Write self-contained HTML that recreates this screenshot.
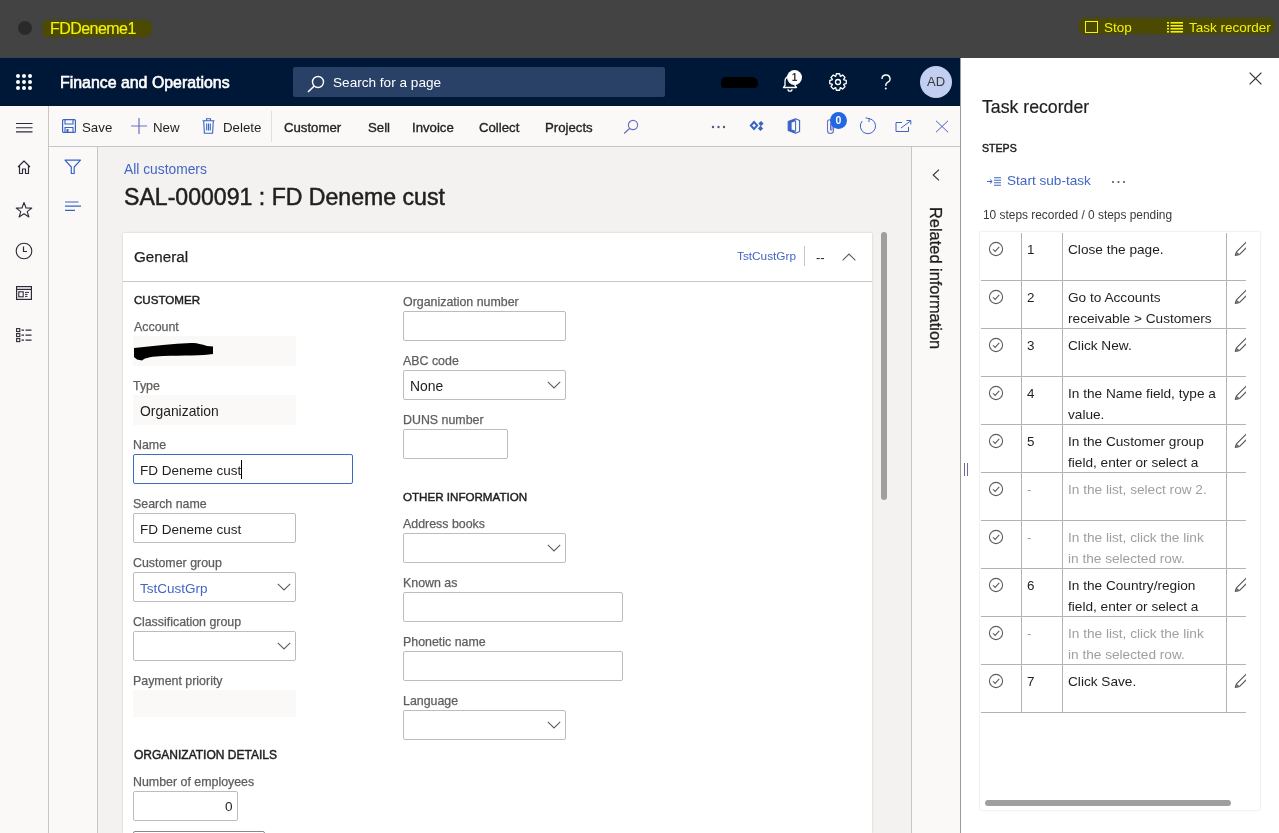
<!DOCTYPE html>
<html><head><meta charset="utf-8">
<style>
*{box-sizing:border-box;margin:0;padding:0}
html,body{width:1279px;height:833px;overflow:hidden;font-family:"Liberation Sans",sans-serif;background:#fff;color:#201f1e;position:relative}
.a{position:absolute}
.t{position:absolute;white-space:nowrap;will-change:transform}
svg.a{overflow:visible}
</style></head><body>
<div class="a" style="left:0px;top:0px;width:1279px;height:58px;background:#434343"></div>
<div class="a" style="left:0px;top:58px;width:960px;height:48px;background:#001838"></div>
<div class="a" style="left:0px;top:57px;width:960px;height:1px;background:#39424f"></div>
<div class="a" style="left:0px;top:106px;width:960px;height:727px;background:#faf9f8"></div>
<div class="a" style="left:98px;top:147px;width:813px;height:686px;background:#f3f2f1"></div>
<div class="a" style="left:48px;top:106px;width:1px;height:727px;background:#c8c6c4"></div>
<div class="a" style="left:49px;top:146px;width:911px;height:1px;background:#c8c6c4"></div>
<div class="a" style="left:97px;top:147px;width:1px;height:686px;background:#c8c6c4"></div>
<div class="a" style="left:911px;top:147px;width:1px;height:686px;background:#c8c6c4"></div>
<div class="a" style="left:960px;top:58px;width:319px;height:775px;background:#ffffff"></div>
<div class="a" style="left:960px;top:58px;width:1px;height:775px;background:#9d9b99"></div>
<div class="a" style="left:18px;top:21px;width:14px;height:14px;border-radius:50%;background:#2a2a2a"></div>
<div class="a" style="left:43px;top:20px;width:109px;height:17px;background:#4b4a00;border-radius:4px 7px 7px 4px;filter:blur(0.8px)"></div>
<div class="t" style="left:50px;top:20.66px;font-size:16px;line-height:16px;color:#f2f20a;font-weight:normal;letter-spacing:-0.55px;-webkit-text-stroke:0.15px #f2f20a;">FDDeneme1</div>
<div class="a" style="left:1079px;top:18px;width:195px;height:16px;background:#4b4a00;border-radius:5px;filter:blur(1px)"></div>
<div class="a" style="left:1085px;top:21px;width:13px;height:12px;border:1.5px solid #f2f20a"></div>
<div class="t" style="left:1104px;top:21.27px;font-size:13.5px;line-height:13.5px;color:#f2f20a;font-weight:normal;">Stop</div>
<svg class="a" style="left:1167px;top:22px;" width="16" height="11" viewBox="0 0 16 11" fill="none"><g fill="#f2f20a"><rect x="0" y="0" width="2" height="1.6"/><rect x="3.5" y="0" width="12.5" height="1.6"/><rect x="0" y="3" width="2" height="1.6"/><rect x="3.5" y="3" width="12.5" height="1.6"/><rect x="0" y="6" width="2" height="1.6"/><rect x="3.5" y="6" width="12.5" height="1.6"/><rect x="0" y="9" width="2" height="1.6"/><rect x="3.5" y="9" width="12.5" height="1.6"/></g></svg>
<div class="t" style="left:1189px;top:21.27px;font-size:13.5px;line-height:13.5px;color:#f2f20a;font-weight:normal;">Task recorder</div>
<svg class="a" style="left:16px;top:74px;" width="16" height="16" viewBox="0 0 16 16" fill="none"><circle cx="2" cy="2" r="2" fill="#fff"/><circle cx="2" cy="8" r="2" fill="#fff"/><circle cx="2" cy="14" r="2" fill="#fff"/><circle cx="8" cy="2" r="2" fill="#fff"/><circle cx="8" cy="8" r="2" fill="#fff"/><circle cx="8" cy="14" r="2" fill="#fff"/><circle cx="14" cy="2" r="2" fill="#fff"/><circle cx="14" cy="8" r="2" fill="#fff"/><circle cx="14" cy="14" r="2" fill="#fff"/></svg>
<div class="t" style="left:60px;top:74.84px;font-size:15.9px;line-height:15.9px;color:#ffffff;font-weight:normal;-webkit-text-stroke:0.6px #ffffff;">Finance and Operations</div>
<div class="a" style="left:293px;top:67px;width:372px;height:30px;background:#294067;border-radius:2px"></div>
<svg class="a" style="left:306px;top:75px;" width="20" height="18" viewBox="0 0 20 18" fill="none"><circle cx="12" cy="7" r="5.5" stroke="#fff" stroke-width="1.4"/><path d="M8.2 11 L2 17" stroke="#fff" stroke-width="1.6"/></svg>
<div class="t" style="left:333px;top:76.49px;font-size:13.6px;line-height:13.6px;color:#ffffff;font-weight:normal;">Search for a page</div>
<div class="a" style="left:721px;top:77px;width:37px;height:11px;background:#000;border-radius:5px 6px 4px 3px"></div>
<svg class="a" style="left:780px;top:72px;" width="24" height="20" viewBox="0 0 24 20" fill="none"><path d="M3.5 15.5 L5 13.5 V9 A5 5 0 0 1 15 9 V13.5 L16.5 15.5 Z" stroke="#fff" stroke-width="1.3" stroke-linejoin="round"/><path d="M8 17.2 A2 2 0 0 0 12 17.2" stroke="#fff" stroke-width="1.3"/></svg>
<div class="a" style="left:787px;top:70px;width:15px;height:15px;border-radius:50%;background:#fff;font-size:10px;font-weight:bold;line-height:15px;text-align:center;color:#323130;will-change:transform">1</div>
<svg class="a" style="left:827.5px;top:72px;" width="20" height="20" viewBox="0 0 20 20" fill="none"><g transform="translate(10 10)" stroke="#fff" stroke-width="1.3" fill="none"><path d="M8.23 -1.67 L8.23 1.67 L5.80 2.18 L5.65 2.56 L7.00 4.64 L4.64 7.00 L2.56 5.65 L2.18 5.80 L1.67 8.23 L-1.67 8.23 L-2.18 5.80 L-2.56 5.65 L-4.64 7.00 L-7.00 4.64 L-5.65 2.56 L-5.80 2.18 L-8.23 1.67 L-8.23 -1.67 L-5.80 -2.18 L-5.65 -2.56 L-7.00 -4.64 L-4.64 -7.00 L-2.56 -5.65 L-2.18 -5.80 L-1.67 -8.23 L1.67 -8.23 L2.18 -5.80 L2.56 -5.65 L4.64 -7.00 L7.00 -4.64 L5.65 -2.56 L5.80 -2.18 Z" stroke-linejoin="round"/><circle r="2.5"/></g></svg>
<svg class="a" style="left:881px;top:75px;" width="10" height="15" viewBox="0 0 10 15" fill="none"><path d="M1 4 A4 3.8 0 1 1 6.5 7.3 C5.3 8 4.8 8.8 4.8 10.3 V11" stroke="#fff" stroke-width="1.4"/><circle cx="4.8" cy="13.6" r="1" fill="#fff"/></svg>
<div class="a" style="left:920px;top:66px;width:32px;height:32px;border-radius:50%;background:#c2cff0;font-size:13px;line-height:32px;text-align:center;color:#3a3a3a;will-change:transform">AD</div>
<svg class="a" style="left:16px;top:122px;" width="17" height="11" viewBox="0 0 17 11" fill="none"><g stroke="#2f2b3a" stroke-width="1.1"><path d="M0 1.5H16.5M0 5.7H16.5M0 9.9H16.5"/></g></svg>
<svg class="a" style="left:16px;top:159px;" width="16" height="16" viewBox="0 0 16 16" fill="none"><path d="M2 8 L8 2 L14 8 M3.5 7 V14.5 H6.5 V10 H9.5 V14.5 H12.5 V7" stroke="#2f2b3a" stroke-width="1.2" stroke-linejoin="round"/></svg>
<svg class="a" style="left:15px;top:201px;" width="18" height="17" viewBox="0 0 18 17" fill="none"><path d="M9 1.5 L11 7 L16.8 7.1 L12.2 10.6 L13.9 16 L9 12.8 L4.1 16 L5.8 10.6 L1.2 7.1 L7 7 Z" stroke="#2f2b3a" stroke-width="1.1" stroke-linejoin="round"/></svg>
<svg class="a" style="left:15px;top:242px;" width="18" height="18" viewBox="0 0 18 18" fill="none"><circle cx="9" cy="9" r="7.8" stroke="#2f2b3a" stroke-width="1.1"/><path d="M8.5 4.5 V9.5 H12" stroke="#2f2b3a" stroke-width="1.2"/></svg>
<svg class="a" style="left:16px;top:286px;" width="16" height="14" viewBox="0 0 16 14" fill="none"><rect x="0.6" y="0.6" width="14.8" height="12.8" stroke="#2f2b3a" stroke-width="1.2"/><path d="M0.6 3.4 H15.4" stroke="#2f2b3a" stroke-width="1.2"/><rect x="2.8" y="5.8" width="4.4" height="5" stroke="#2f2b3a" stroke-width="1.1"/><path d="M9 6.4 H13 M9 8.4 H11.5 M9 10.4 H11.5" stroke="#2f2b3a" stroke-width="1"/></svg>
<svg class="a" style="left:16px;top:328px;" width="16" height="14" viewBox="0 0 16 14" fill="none"><g stroke="#2f2b3a" stroke-width="1.1"><rect x="0.6" y="0.6" width="3.2" height="3" /><rect x="0.6" y="5.6" width="3.2" height="3"/><rect x="0.6" y="10.6" width="3.2" height="3"/><path d="M5.5 2.1H8 M9.5 2.1H15.5 M5.5 7.1H8 M9.5 7.1H15.5 M5.5 12.1H8 M9.5 12.1H15.5"/></g></svg>
<svg class="a" style="left:64px;top:159px;" width="18" height="16" viewBox="0 0 18 16" fill="none"><path d="M1 1.2 H16.5 L10.2 8 V14.5 H7.3 V8 Z" stroke="#3a63c6" stroke-width="1.2" stroke-linejoin="round"/></svg>
<svg class="a" style="left:65px;top:201px;" width="17" height="11" viewBox="0 0 17 11" fill="none"><g stroke="#3a63c6" stroke-width="1.2"><path d="M0 1H13.5 M0 5.2H16 M0 9.4H10"/></g></svg>
<svg class="a" style="left:62px;top:119px;" width="14" height="14" viewBox="0 0 14 14" fill="none"><rect x="0.6" y="0.6" width="12.8" height="12.8" rx="1" stroke="#3a63c6" stroke-width="1.2"/><path d="M3 0.6 V5 H11 V0.6" stroke="#3a63c6" stroke-width="1.1"/><path d="M3 13.4 V8.5 H11 V13.4" stroke="#3a63c6" stroke-width="1.1"/><rect x="4.5" y="10" width="2" height="3.4" fill="#3a63c6"/></svg>
<div class="t" style="left:82px;top:120.74px;font-size:13.3px;line-height:13.3px;color:#201f1e;font-weight:normal;">Save</div>
<svg class="a" style="left:131px;top:118px;" width="16" height="16" viewBox="0 0 16 16" fill="none"><path d="M8 0 V16 M0 8 H16" stroke="#6670c4" stroke-width="1.2"/></svg>
<div class="t" style="left:152.5px;top:120.74px;font-size:13.3px;line-height:13.3px;color:#201f1e;font-weight:normal;">New</div>
<svg class="a" style="left:202px;top:118px;" width="13" height="16" viewBox="0 0 13 16" fill="none"><path d="M0.5 2.8 H12.5 M4.5 2.8 V0.8 H8.5 V2.8 M1.7 2.8 L2.4 15.2 H10.6 L11.3 2.8 M4.7 5.5 V12.6 M6.5 5.5 V12.6 M8.3 5.5 V12.6" stroke="#3a63c6" stroke-width="1.1"/></svg>
<div class="t" style="left:222.5px;top:120.74px;font-size:13.3px;line-height:13.3px;color:#201f1e;font-weight:normal;">Delete</div>
<div class="a" style="left:271px;top:111px;width:1px;height:31px;background:#e1dfdd"></div>
<div class="t" style="left:284px;top:120.83px;font-size:13.2px;line-height:13.2px;color:#252423;font-weight:normal;-webkit-text-stroke:0.35px #252423;">Customer</div>
<div class="t" style="left:367.5px;top:120.83px;font-size:13.2px;line-height:13.2px;color:#252423;font-weight:normal;-webkit-text-stroke:0.35px #252423;">Sell</div>
<div class="t" style="left:411.5px;top:120.83px;font-size:13.2px;line-height:13.2px;color:#252423;font-weight:normal;-webkit-text-stroke:0.35px #252423;">Invoice</div>
<div class="t" style="left:479px;top:120.83px;font-size:13.2px;line-height:13.2px;color:#252423;font-weight:normal;-webkit-text-stroke:0.35px #252423;">Collect</div>
<div class="t" style="left:544.5px;top:120.83px;font-size:13.2px;line-height:13.2px;color:#252423;font-weight:normal;-webkit-text-stroke:0.35px #252423;">Projects</div>
<svg class="a" style="left:623px;top:119px;" width="16" height="15" viewBox="0 0 16 15" fill="none"><circle cx="10" cy="6" r="4.6" stroke="#6670c4" stroke-width="1.2"/><path d="M6.8 9.3 L1.2 14.4" stroke="#6670c4" stroke-width="1.3"/></svg>
<svg class="a" style="left:711px;top:125px;" width="16" height="4" viewBox="0 0 16 4" fill="none"><g fill="#4d5a78"><circle cx="2" cy="2" r="1.2"/><circle cx="7.5" cy="2" r="1.2"/><circle cx="13" cy="2" r="1.2"/></g></svg>
<svg class="a" style="left:749px;top:120px;" width="17" height="12" viewBox="0 0 17 12" fill="none"><path d="M5 2 L8.2 5.5 L5 9 L1.8 5.5 Z" stroke="#3a63c6" stroke-width="1.9" stroke-linejoin="miter"/><path d="M12 1 L14.6 3.6 L12 6.2 L9.4 3.6 Z M11.5 5.8 L14.1 8.4 L11.5 11 L8.9 8.4 Z" fill="#3a63c6"/></svg>
<svg class="a" style="left:787px;top:118px;" width="14" height="16" viewBox="0 0 14 16" fill="none"><path d="M1.2 3.4 L8.6 0.8 L12.6 2.6 V13.4 L8.6 15.2 L1.2 12.6 Z" stroke="#3a63c6" stroke-width="1.1" stroke-linejoin="round"/><path d="M1.2 3.4 L8.6 0.8 V3.2 L4.6 4.6 V11.6 L8.6 12.8 V15.2 L1.2 12.6 Z" fill="#3a63c6"/><path d="M8.6 3 V13" stroke="#3a63c6" stroke-width="1"/></svg>
<svg class="a" style="left:826px;top:118px;" width="10" height="17" viewBox="0 0 10 17" fill="none"><path d="M7.5 5 V12.5 A3 3 0 0 1 1.5 12.5 V4 A2.2 2.2 0 0 1 6 4 V11.5 A0.8 0.8 0 0 1 4.5 11.5 V5.5" stroke="#6670c4" stroke-width="1.1"/></svg>
<div class="a" style="left:830px;top:112px;width:17px;height:17px;border-radius:50%;background:#2266e3;font-size:10.5px;font-weight:bold;line-height:17px;text-align:center;color:#fff;will-change:transform">0</div>
<svg class="a" style="left:859px;top:117px;" width="18" height="18" viewBox="0 0 18 18" fill="none"><path d="M10.3 1.6 A7.6 7.6 0 1 1 3.2 4.1" stroke="#3a63c6" stroke-width="1"/><path d="M6.6 0.9 L10.3 1.6 L9.8 5" stroke="#3a63c6" stroke-width="1"/></svg>
<svg class="a" style="left:895px;top:119px;" width="17" height="14" viewBox="0 0 17 14" fill="none"><path d="M7 3.5 H1 V12.5 H13.5 V8" stroke="#3a63c6" stroke-width="1"/><path d="M6 9 L15.5 2 M11.5 1.5 H15.8 V5.5" stroke="#3a63c6" stroke-width="1"/></svg>
<svg class="a" style="left:935px;top:120px;" width="14" height="13" viewBox="0 0 14 13" fill="none"><path d="M1 0.8 L13 12.2 M13 0.8 L1 12.2" stroke="#4a62b8" stroke-width="1"/></svg>
<div class="t" style="left:124px;top:162.62px;font-size:13.8px;line-height:13.8px;color:#4366c4;font-weight:normal;">All customers</div>
<div class="t" style="left:123.5px;top:186.45px;font-size:23.1px;line-height:23.1px;color:#201f1e;font-weight:normal;-webkit-text-stroke:0.5px #201f1e;">SAL-000091 : FD Deneme cust</div>
<div class="a" style="left:123px;top:233px;width:749px;height:600px;background:#fff;box-shadow:0 0 2px rgba(0,0,0,0.18)"></div>
<div class="a" style="left:123px;top:281px;width:749px;height:1px;background:#c8c6c4"></div>
<div class="t" style="left:133.5px;top:249.13px;font-size:15.2px;line-height:15.2px;color:#201f1e;font-weight:normal;-webkit-text-stroke:0.25px #201f1e;">General</div>
<div class="t" style="left:736.5px;top:251.31px;font-size:11.8px;line-height:11.8px;color:#4366c4;font-weight:normal;">TstCustGrp</div>
<div class="a" style="left:804px;top:246px;width:1px;height:20px;background:#c8c6c4"></div>
<div class="t" style="left:816px;top:250.50px;font-size:13px;line-height:13px;color:#201f1e;font-weight:normal;">--</div>
<svg class="a" style="left:842px;top:253px;" width="14" height="8" viewBox="0 0 14 8" fill="none"><path d="M0.6 7.4 L7 1 L13.4 7.4" stroke="#605e5c" stroke-width="1.1"/></svg>
<div class="a" style="left:881px;top:232px;width:6px;height:268px;background:#a19f9d;border-radius:3px"></div>
<div class="t" style="left:133.5px;top:294.38px;font-size:11.6px;line-height:11.6px;color:#201f1e;font-weight:normal;-webkit-text-stroke:0.45px #201f1e;">CUSTOMER</div>
<div class="t" style="left:403.2px;top:490.68px;font-size:11.6px;line-height:11.6px;color:#201f1e;font-weight:normal;-webkit-text-stroke:0.45px #201f1e;">OTHER INFORMATION</div>
<div class="t" style="left:133.5px;top:748.84px;font-size:12px;line-height:12px;color:#201f1e;font-weight:normal;-webkit-text-stroke:0.45px #201f1e;">ORGANIZATION DETAILS</div>
<div class="t" style="left:133.5px;top:320.50px;font-size:12.4px;line-height:12.4px;color:#605e5c;font-weight:normal;-webkit-text-stroke:0.25px #605e5c;">Account</div>
<div class="a" style="left:133px;top:336px;width:163px;height:30px;background:#faf9f8"></div>
<svg class="a" style="left:133px;top:342px" width="82" height="20" viewBox="0 0 82 20"><path d="M1 6 C20 4 40 1.5 58 1 C66 1 70 3 74 4 L80 4.5 L80 12 C70 13.5 50 13.5 30 14 C20 14.5 12 15.5 9 18.5 L4 17.5 L1 15 Z" fill="#000"/></svg>
<div class="t" style="left:133px;top:379.50px;font-size:12.4px;line-height:12.4px;color:#605e5c;font-weight:normal;-webkit-text-stroke:0.25px #605e5c;">Type</div>
<div class="a" style="left:133px;top:395px;width:163px;height:30px;background:#faf9f8"></div>
<div class="t" style="left:139.5px;top:404.73px;font-size:13.9px;line-height:13.9px;color:#201f1e;font-weight:normal;">Organization</div>
<div class="t" style="left:133px;top:438.50px;font-size:12.4px;line-height:12.4px;color:#605e5c;font-weight:normal;-webkit-text-stroke:0.25px #605e5c;">Name</div>
<div class="a" style="left:133px;top:454px;width:220px;height:30px;background:#fff;border:1px solid #3b6cbf;border-radius:2px"></div>
<div class="t" style="left:139.5px;top:464.37px;font-size:13.5px;line-height:13.5px;color:#201f1e;font-weight:normal;">FD Deneme cust</div>
<div class="a" style="left:241px;top:460px;width:1px;height:19px;background:#000"></div>
<div class="t" style="left:133px;top:497.50px;font-size:12.4px;line-height:12.4px;color:#605e5c;font-weight:normal;-webkit-text-stroke:0.25px #605e5c;">Search name</div>
<div class="a" style="left:133px;top:513px;width:163px;height:30px;background:#fff;border:1px solid #bebbb8;border-radius:2px"></div>
<div class="t" style="left:139.5px;top:523.07px;font-size:13.5px;line-height:13.5px;color:#201f1e;font-weight:normal;">FD Deneme cust</div>
<div class="t" style="left:133px;top:556.50px;font-size:12.4px;line-height:12.4px;color:#605e5c;font-weight:normal;-webkit-text-stroke:0.25px #605e5c;">Customer group</div>
<div class="a" style="left:133px;top:572px;width:163px;height:30px;background:#fff;border:1px solid #bebbb8;border-radius:2px"></div>
<div class="t" style="left:139.5px;top:582.07px;font-size:13.5px;line-height:13.5px;color:#4366c4;font-weight:normal;">TstCustGrp</div>
<svg class="a" style="left:277px;top:583px;" width="14" height="8" viewBox="0 0 14 8" fill="none"><path d="M0.8 0.8 L7 7 L13.2 0.8" stroke="#605e5c" stroke-width="1.1"/></svg>
<div class="t" style="left:133px;top:615.50px;font-size:12.4px;line-height:12.4px;color:#605e5c;font-weight:normal;-webkit-text-stroke:0.25px #605e5c;">Classification group</div>
<div class="a" style="left:133px;top:631px;width:163px;height:30px;background:#fff;border:1px solid #bebbb8;border-radius:2px"></div>
<svg class="a" style="left:277px;top:642px;" width="14" height="8" viewBox="0 0 14 8" fill="none"><path d="M0.8 0.8 L7 7 L13.2 0.8" stroke="#605e5c" stroke-width="1.1"/></svg>
<div class="t" style="left:133px;top:674.50px;font-size:12.4px;line-height:12.4px;color:#605e5c;font-weight:normal;-webkit-text-stroke:0.25px #605e5c;">Payment priority</div>
<div class="a" style="left:133px;top:690px;width:163px;height:27px;background:#faf9f8"></div>
<div class="t" style="left:133px;top:775.50px;font-size:12.4px;line-height:12.4px;color:#605e5c;font-weight:normal;-webkit-text-stroke:0.25px #605e5c;">Number of employees</div>
<div class="a" style="left:133px;top:791px;width:105px;height:30px;background:#fff;border:1px solid #bebbb8;border-radius:2px"></div>
<div class="t" style="left:133px;width:99.5px;text-align:right;top:800.49px;font-size:13.6px;line-height:13.6px;color:#201f1e">0</div>
<div class="a" style="left:133px;top:831px;width:132px;height:10px;background:#fff;border:1px solid #8a8886;border-radius:2px"></div>
<div class="t" style="left:403px;top:295.50px;font-size:12.4px;line-height:12.4px;color:#605e5c;font-weight:normal;-webkit-text-stroke:0.25px #605e5c;">Organization number</div>
<div class="a" style="left:403px;top:311px;width:163px;height:30px;background:#fff;border:1px solid #bebbb8;border-radius:2px"></div>
<div class="t" style="left:403px;top:354.50px;font-size:12.4px;line-height:12.4px;color:#605e5c;font-weight:normal;-webkit-text-stroke:0.25px #605e5c;">ABC code</div>
<div class="a" style="left:403px;top:370px;width:163px;height:30px;background:#fff;border:1px solid #bebbb8;border-radius:2px"></div>
<div class="t" style="left:409.5px;top:379.73px;font-size:13.9px;line-height:13.9px;color:#201f1e;font-weight:normal;">None</div>
<svg class="a" style="left:547px;top:381px;" width="14" height="8" viewBox="0 0 14 8" fill="none"><path d="M0.8 0.8 L7 7 L13.2 0.8" stroke="#605e5c" stroke-width="1.1"/></svg>
<div class="t" style="left:403px;top:413.50px;font-size:12.4px;line-height:12.4px;color:#605e5c;font-weight:normal;-webkit-text-stroke:0.25px #605e5c;">DUNS number</div>
<div class="a" style="left:403px;top:429px;width:105px;height:30px;background:#fff;border:1px solid #bebbb8;border-radius:2px"></div>
<div class="t" style="left:403px;top:517.50px;font-size:12.4px;line-height:12.4px;color:#605e5c;font-weight:normal;-webkit-text-stroke:0.25px #605e5c;">Address books</div>
<div class="a" style="left:403px;top:533px;width:163px;height:30px;background:#fff;border:1px solid #bebbb8;border-radius:2px"></div>
<svg class="a" style="left:547px;top:544px;" width="14" height="8" viewBox="0 0 14 8" fill="none"><path d="M0.8 0.8 L7 7 L13.2 0.8" stroke="#605e5c" stroke-width="1.1"/></svg>
<div class="t" style="left:403px;top:576.50px;font-size:12.4px;line-height:12.4px;color:#605e5c;font-weight:normal;-webkit-text-stroke:0.25px #605e5c;">Known as</div>
<div class="a" style="left:403px;top:592px;width:220px;height:30px;background:#fff;border:1px solid #bebbb8;border-radius:2px"></div>
<div class="t" style="left:403px;top:635.50px;font-size:12.4px;line-height:12.4px;color:#605e5c;font-weight:normal;-webkit-text-stroke:0.25px #605e5c;">Phonetic name</div>
<div class="a" style="left:403px;top:651px;width:220px;height:30px;background:#fff;border:1px solid #bebbb8;border-radius:2px"></div>
<div class="t" style="left:403px;top:694.50px;font-size:12.4px;line-height:12.4px;color:#605e5c;font-weight:normal;-webkit-text-stroke:0.25px #605e5c;">Language</div>
<div class="a" style="left:403px;top:710px;width:163px;height:30px;background:#fff;border:1px solid #bebbb8;border-radius:2px"></div>
<svg class="a" style="left:547px;top:721px;" width="14" height="8" viewBox="0 0 14 8" fill="none"><path d="M0.8 0.8 L7 7 L13.2 0.8" stroke="#605e5c" stroke-width="1.1"/></svg>
<svg class="a" style="left:932px;top:169px;" width="8" height="12" viewBox="0 0 8 12" fill="none"><path d="M7 0.6 L1.2 6 L7 11.4" stroke="#323130" stroke-width="1.1"/></svg>
<div class="t" style="left:926px;top:207px;font-size:16.4px;line-height:20px;color:#201f1e;writing-mode:vertical-rl;-webkit-text-stroke:0.3px #201f1e">Related information</div>
<svg class="a" style="left:963px;top:463px;" width="6" height="13" viewBox="0 0 6 13" fill="none"><path d="M1.5 0 V13 M4.5 0 V13" stroke="#6b6b9c" stroke-width="1"/></svg>
<svg class="a" style="left:1249px;top:72px;" width="13" height="13" viewBox="0 0 13 13" fill="none"><path d="M0.6 0.6 L12.4 12.4 M12.4 0.6 L0.6 12.4" stroke="#323130" stroke-width="1.2"/></svg>
<div class="t" style="left:981.5px;top:98.82px;font-size:17.7px;line-height:17.7px;color:#201f1e;font-weight:normal;-webkit-text-stroke:0.2px #201f1e;">Task recorder</div>
<div class="t" style="left:981.5px;top:143.33px;font-size:10.6px;line-height:10.6px;color:#201f1e;font-weight:normal;-webkit-text-stroke:0.45px #201f1e;">STEPS</div>
<svg class="a" style="left:987px;top:177px;" width="15" height="9" viewBox="0 0 15 9" fill="none"><path d="M0 4.5 H5 M3 2.5 L5.2 4.5 L3 6.5" stroke="#4366c4" stroke-width="1"/><path d="M7 0.7 H14 M7 3.2 H14 M7 5.7 H14 M7 8.2 H14" stroke="#4366c4" stroke-width="1.1"/></svg>
<div class="t" style="left:1007px;top:174.09px;font-size:13.6px;line-height:13.6px;color:#4366c4;font-weight:normal;">Start sub-task</div>
<svg class="a" style="left:1111px;top:180px;" width="16" height="4" viewBox="0 0 16 4" fill="none"><g fill="#4d5a78"><circle cx="2" cy="2" r="1.1"/><circle cx="7.5" cy="2" r="1.1"/><circle cx="13" cy="2" r="1.1"/></g></svg>
<div class="t" style="left:982.5px;top:210.43px;font-size:11.9px;line-height:11.9px;color:#3b3a39;font-weight:normal;">10 steps recorded / 0 steps pending</div>
<div class="a" style="left:980px;top:232px;width:280px;height:578px;background:#fff;box-shadow:0 0 2px rgba(0,0,0,0.16)"></div>
<div class="a" style="left:1021px;top:233px;width:1px;height:480px;background:#b5b3b1"></div>
<div class="a" style="left:1062px;top:233px;width:1px;height:480px;background:#b5b3b1"></div>
<div class="a" style="left:1226px;top:233px;width:1px;height:480px;background:#b5b3b1"></div>
<div class="a" style="left:981px;top:280px;width:265px;height:1px;background:#b5b3b1"></div>
<svg class="a" style="left:988px;top:241px;" width="16" height="16" viewBox="0 0 16 16" fill="none"><circle cx="8" cy="8" r="6.6" stroke="#605e5c" stroke-width="1.1"/><path d="M5 8.4 L7.2 10.4 L11.2 5.8" stroke="#605e5c" stroke-width="1.1"/></svg>
<div class="t" style="left:1027px;top:242.66px;font-size:13.4px;line-height:13.4px;color:#201f1e;font-weight:normal;">1</div>
<div class="t" style="left:1067.6px;top:243.25px;font-size:13.65px;line-height:13.65px;color:#201f1e;font-weight:normal;">Close the page.</div>
<svg class="a" style="left:1233px;top:240px;" width="16" height="17" viewBox="0 0 16 17" fill="none"><path d="M3.2 12.2 L15 0.4 M6.4 14.6 L15 6" stroke="#555453" stroke-width="1.1"/><path d="M3.2 12.2 L2.2 15.6 L6.4 14.6 Z" stroke="#555453" stroke-width="1" stroke-linejoin="round" fill="#8a8886"/></svg>
<div class="a" style="left:981px;top:328px;width:265px;height:1px;background:#b5b3b1"></div>
<svg class="a" style="left:988px;top:289px;" width="16" height="16" viewBox="0 0 16 16" fill="none"><circle cx="8" cy="8" r="6.6" stroke="#605e5c" stroke-width="1.1"/><path d="M5 8.4 L7.2 10.4 L11.2 5.8" stroke="#605e5c" stroke-width="1.1"/></svg>
<div class="t" style="left:1027px;top:290.66px;font-size:13.4px;line-height:13.4px;color:#201f1e;font-weight:normal;">2</div>
<div class="t" style="left:1067.6px;top:291.25px;font-size:13.65px;line-height:13.65px;color:#201f1e;font-weight:normal;">Go to Accounts</div>
<div class="t" style="left:1067.6px;top:312.25px;font-size:13.65px;line-height:13.65px;color:#201f1e;font-weight:normal;">receivable &gt; Customers</div>
<svg class="a" style="left:1233px;top:288px;" width="16" height="17" viewBox="0 0 16 17" fill="none"><path d="M3.2 12.2 L15 0.4 M6.4 14.6 L15 6" stroke="#555453" stroke-width="1.1"/><path d="M3.2 12.2 L2.2 15.6 L6.4 14.6 Z" stroke="#555453" stroke-width="1" stroke-linejoin="round" fill="#8a8886"/></svg>
<div class="a" style="left:981px;top:376px;width:265px;height:1px;background:#b5b3b1"></div>
<svg class="a" style="left:988px;top:337px;" width="16" height="16" viewBox="0 0 16 16" fill="none"><circle cx="8" cy="8" r="6.6" stroke="#605e5c" stroke-width="1.1"/><path d="M5 8.4 L7.2 10.4 L11.2 5.8" stroke="#605e5c" stroke-width="1.1"/></svg>
<div class="t" style="left:1027px;top:338.66px;font-size:13.4px;line-height:13.4px;color:#201f1e;font-weight:normal;">3</div>
<div class="t" style="left:1067.6px;top:339.25px;font-size:13.65px;line-height:13.65px;color:#201f1e;font-weight:normal;">Click New.</div>
<svg class="a" style="left:1233px;top:336px;" width="16" height="17" viewBox="0 0 16 17" fill="none"><path d="M3.2 12.2 L15 0.4 M6.4 14.6 L15 6" stroke="#555453" stroke-width="1.1"/><path d="M3.2 12.2 L2.2 15.6 L6.4 14.6 Z" stroke="#555453" stroke-width="1" stroke-linejoin="round" fill="#8a8886"/></svg>
<div class="a" style="left:981px;top:424px;width:265px;height:1px;background:#b5b3b1"></div>
<svg class="a" style="left:988px;top:385px;" width="16" height="16" viewBox="0 0 16 16" fill="none"><circle cx="8" cy="8" r="6.6" stroke="#605e5c" stroke-width="1.1"/><path d="M5 8.4 L7.2 10.4 L11.2 5.8" stroke="#605e5c" stroke-width="1.1"/></svg>
<div class="t" style="left:1027px;top:386.66px;font-size:13.4px;line-height:13.4px;color:#201f1e;font-weight:normal;">4</div>
<div class="t" style="left:1067.6px;top:387.25px;font-size:13.65px;line-height:13.65px;color:#201f1e;font-weight:normal;">In the Name field, type a</div>
<div class="t" style="left:1067.6px;top:408.25px;font-size:13.65px;line-height:13.65px;color:#201f1e;font-weight:normal;">value.</div>
<svg class="a" style="left:1233px;top:384px;" width="16" height="17" viewBox="0 0 16 17" fill="none"><path d="M3.2 12.2 L15 0.4 M6.4 14.6 L15 6" stroke="#555453" stroke-width="1.1"/><path d="M3.2 12.2 L2.2 15.6 L6.4 14.6 Z" stroke="#555453" stroke-width="1" stroke-linejoin="round" fill="#8a8886"/></svg>
<div class="a" style="left:981px;top:472px;width:265px;height:1px;background:#b5b3b1"></div>
<svg class="a" style="left:988px;top:433px;" width="16" height="16" viewBox="0 0 16 16" fill="none"><circle cx="8" cy="8" r="6.6" stroke="#605e5c" stroke-width="1.1"/><path d="M5 8.4 L7.2 10.4 L11.2 5.8" stroke="#605e5c" stroke-width="1.1"/></svg>
<div class="t" style="left:1027px;top:434.66px;font-size:13.4px;line-height:13.4px;color:#201f1e;font-weight:normal;">5</div>
<div class="t" style="left:1067.6px;top:435.25px;font-size:13.65px;line-height:13.65px;color:#201f1e;font-weight:normal;">In the Customer group</div>
<div class="t" style="left:1067.6px;top:456.25px;font-size:13.65px;line-height:13.65px;color:#201f1e;font-weight:normal;">field, enter or select a</div>
<svg class="a" style="left:1233px;top:432px;" width="16" height="17" viewBox="0 0 16 17" fill="none"><path d="M3.2 12.2 L15 0.4 M6.4 14.6 L15 6" stroke="#555453" stroke-width="1.1"/><path d="M3.2 12.2 L2.2 15.6 L6.4 14.6 Z" stroke="#555453" stroke-width="1" stroke-linejoin="round" fill="#8a8886"/></svg>
<div class="a" style="left:981px;top:520px;width:265px;height:1px;background:#b5b3b1"></div>
<svg class="a" style="left:988px;top:481px;" width="16" height="16" viewBox="0 0 16 16" fill="none"><circle cx="8" cy="8" r="6.6" stroke="#605e5c" stroke-width="1.1"/><path d="M5 8.4 L7.2 10.4 L11.2 5.8" stroke="#605e5c" stroke-width="1.1"/></svg>
<div class="t" style="left:1027px;top:482.66px;font-size:13.4px;line-height:13.4px;color:#a19f9d;font-weight:normal;">-</div>
<div class="t" style="left:1067.6px;top:483.25px;font-size:13.65px;line-height:13.65px;color:#a19f9d;font-weight:normal;">In the list, select row 2.</div>
<div class="a" style="left:981px;top:568px;width:265px;height:1px;background:#b5b3b1"></div>
<svg class="a" style="left:988px;top:529px;" width="16" height="16" viewBox="0 0 16 16" fill="none"><circle cx="8" cy="8" r="6.6" stroke="#605e5c" stroke-width="1.1"/><path d="M5 8.4 L7.2 10.4 L11.2 5.8" stroke="#605e5c" stroke-width="1.1"/></svg>
<div class="t" style="left:1027px;top:530.66px;font-size:13.4px;line-height:13.4px;color:#a19f9d;font-weight:normal;">-</div>
<div class="t" style="left:1067.6px;top:531.25px;font-size:13.65px;line-height:13.65px;color:#a19f9d;font-weight:normal;">In the list, click the link</div>
<div class="t" style="left:1067.6px;top:552.25px;font-size:13.65px;line-height:13.65px;color:#a19f9d;font-weight:normal;">in the selected row.</div>
<div class="a" style="left:981px;top:616px;width:265px;height:1px;background:#b5b3b1"></div>
<svg class="a" style="left:988px;top:577px;" width="16" height="16" viewBox="0 0 16 16" fill="none"><circle cx="8" cy="8" r="6.6" stroke="#605e5c" stroke-width="1.1"/><path d="M5 8.4 L7.2 10.4 L11.2 5.8" stroke="#605e5c" stroke-width="1.1"/></svg>
<div class="t" style="left:1027px;top:578.66px;font-size:13.4px;line-height:13.4px;color:#201f1e;font-weight:normal;">6</div>
<div class="t" style="left:1067.6px;top:579.25px;font-size:13.65px;line-height:13.65px;color:#201f1e;font-weight:normal;">In the Country/region</div>
<div class="t" style="left:1067.6px;top:600.25px;font-size:13.65px;line-height:13.65px;color:#201f1e;font-weight:normal;">field, enter or select a</div>
<svg class="a" style="left:1233px;top:576px;" width="16" height="17" viewBox="0 0 16 17" fill="none"><path d="M3.2 12.2 L15 0.4 M6.4 14.6 L15 6" stroke="#555453" stroke-width="1.1"/><path d="M3.2 12.2 L2.2 15.6 L6.4 14.6 Z" stroke="#555453" stroke-width="1" stroke-linejoin="round" fill="#8a8886"/></svg>
<div class="a" style="left:981px;top:664px;width:265px;height:1px;background:#b5b3b1"></div>
<svg class="a" style="left:988px;top:625px;" width="16" height="16" viewBox="0 0 16 16" fill="none"><circle cx="8" cy="8" r="6.6" stroke="#605e5c" stroke-width="1.1"/><path d="M5 8.4 L7.2 10.4 L11.2 5.8" stroke="#605e5c" stroke-width="1.1"/></svg>
<div class="t" style="left:1027px;top:626.66px;font-size:13.4px;line-height:13.4px;color:#a19f9d;font-weight:normal;">-</div>
<div class="t" style="left:1067.6px;top:627.25px;font-size:13.65px;line-height:13.65px;color:#a19f9d;font-weight:normal;">In the list, click the link</div>
<div class="t" style="left:1067.6px;top:648.25px;font-size:13.65px;line-height:13.65px;color:#a19f9d;font-weight:normal;">in the selected row.</div>
<div class="a" style="left:981px;top:712px;width:265px;height:1px;background:#b5b3b1"></div>
<svg class="a" style="left:988px;top:673px;" width="16" height="16" viewBox="0 0 16 16" fill="none"><circle cx="8" cy="8" r="6.6" stroke="#605e5c" stroke-width="1.1"/><path d="M5 8.4 L7.2 10.4 L11.2 5.8" stroke="#605e5c" stroke-width="1.1"/></svg>
<div class="t" style="left:1027px;top:674.66px;font-size:13.4px;line-height:13.4px;color:#201f1e;font-weight:normal;">7</div>
<div class="t" style="left:1067.6px;top:675.25px;font-size:13.65px;line-height:13.65px;color:#201f1e;font-weight:normal;">Click Save.</div>
<svg class="a" style="left:1233px;top:672px;" width="16" height="17" viewBox="0 0 16 17" fill="none"><path d="M3.2 12.2 L15 0.4 M6.4 14.6 L15 6" stroke="#555453" stroke-width="1.1"/><path d="M3.2 12.2 L2.2 15.6 L6.4 14.6 Z" stroke="#555453" stroke-width="1" stroke-linejoin="round" fill="#8a8886"/></svg>
<div class="a" style="left:1246px;top:233px;width:14px;height:480px;background:#fff"></div>
<div class="a" style="left:985px;top:800px;width:246px;height:6px;background:#a19f9d;border-radius:3px"></div>
</body></html>
